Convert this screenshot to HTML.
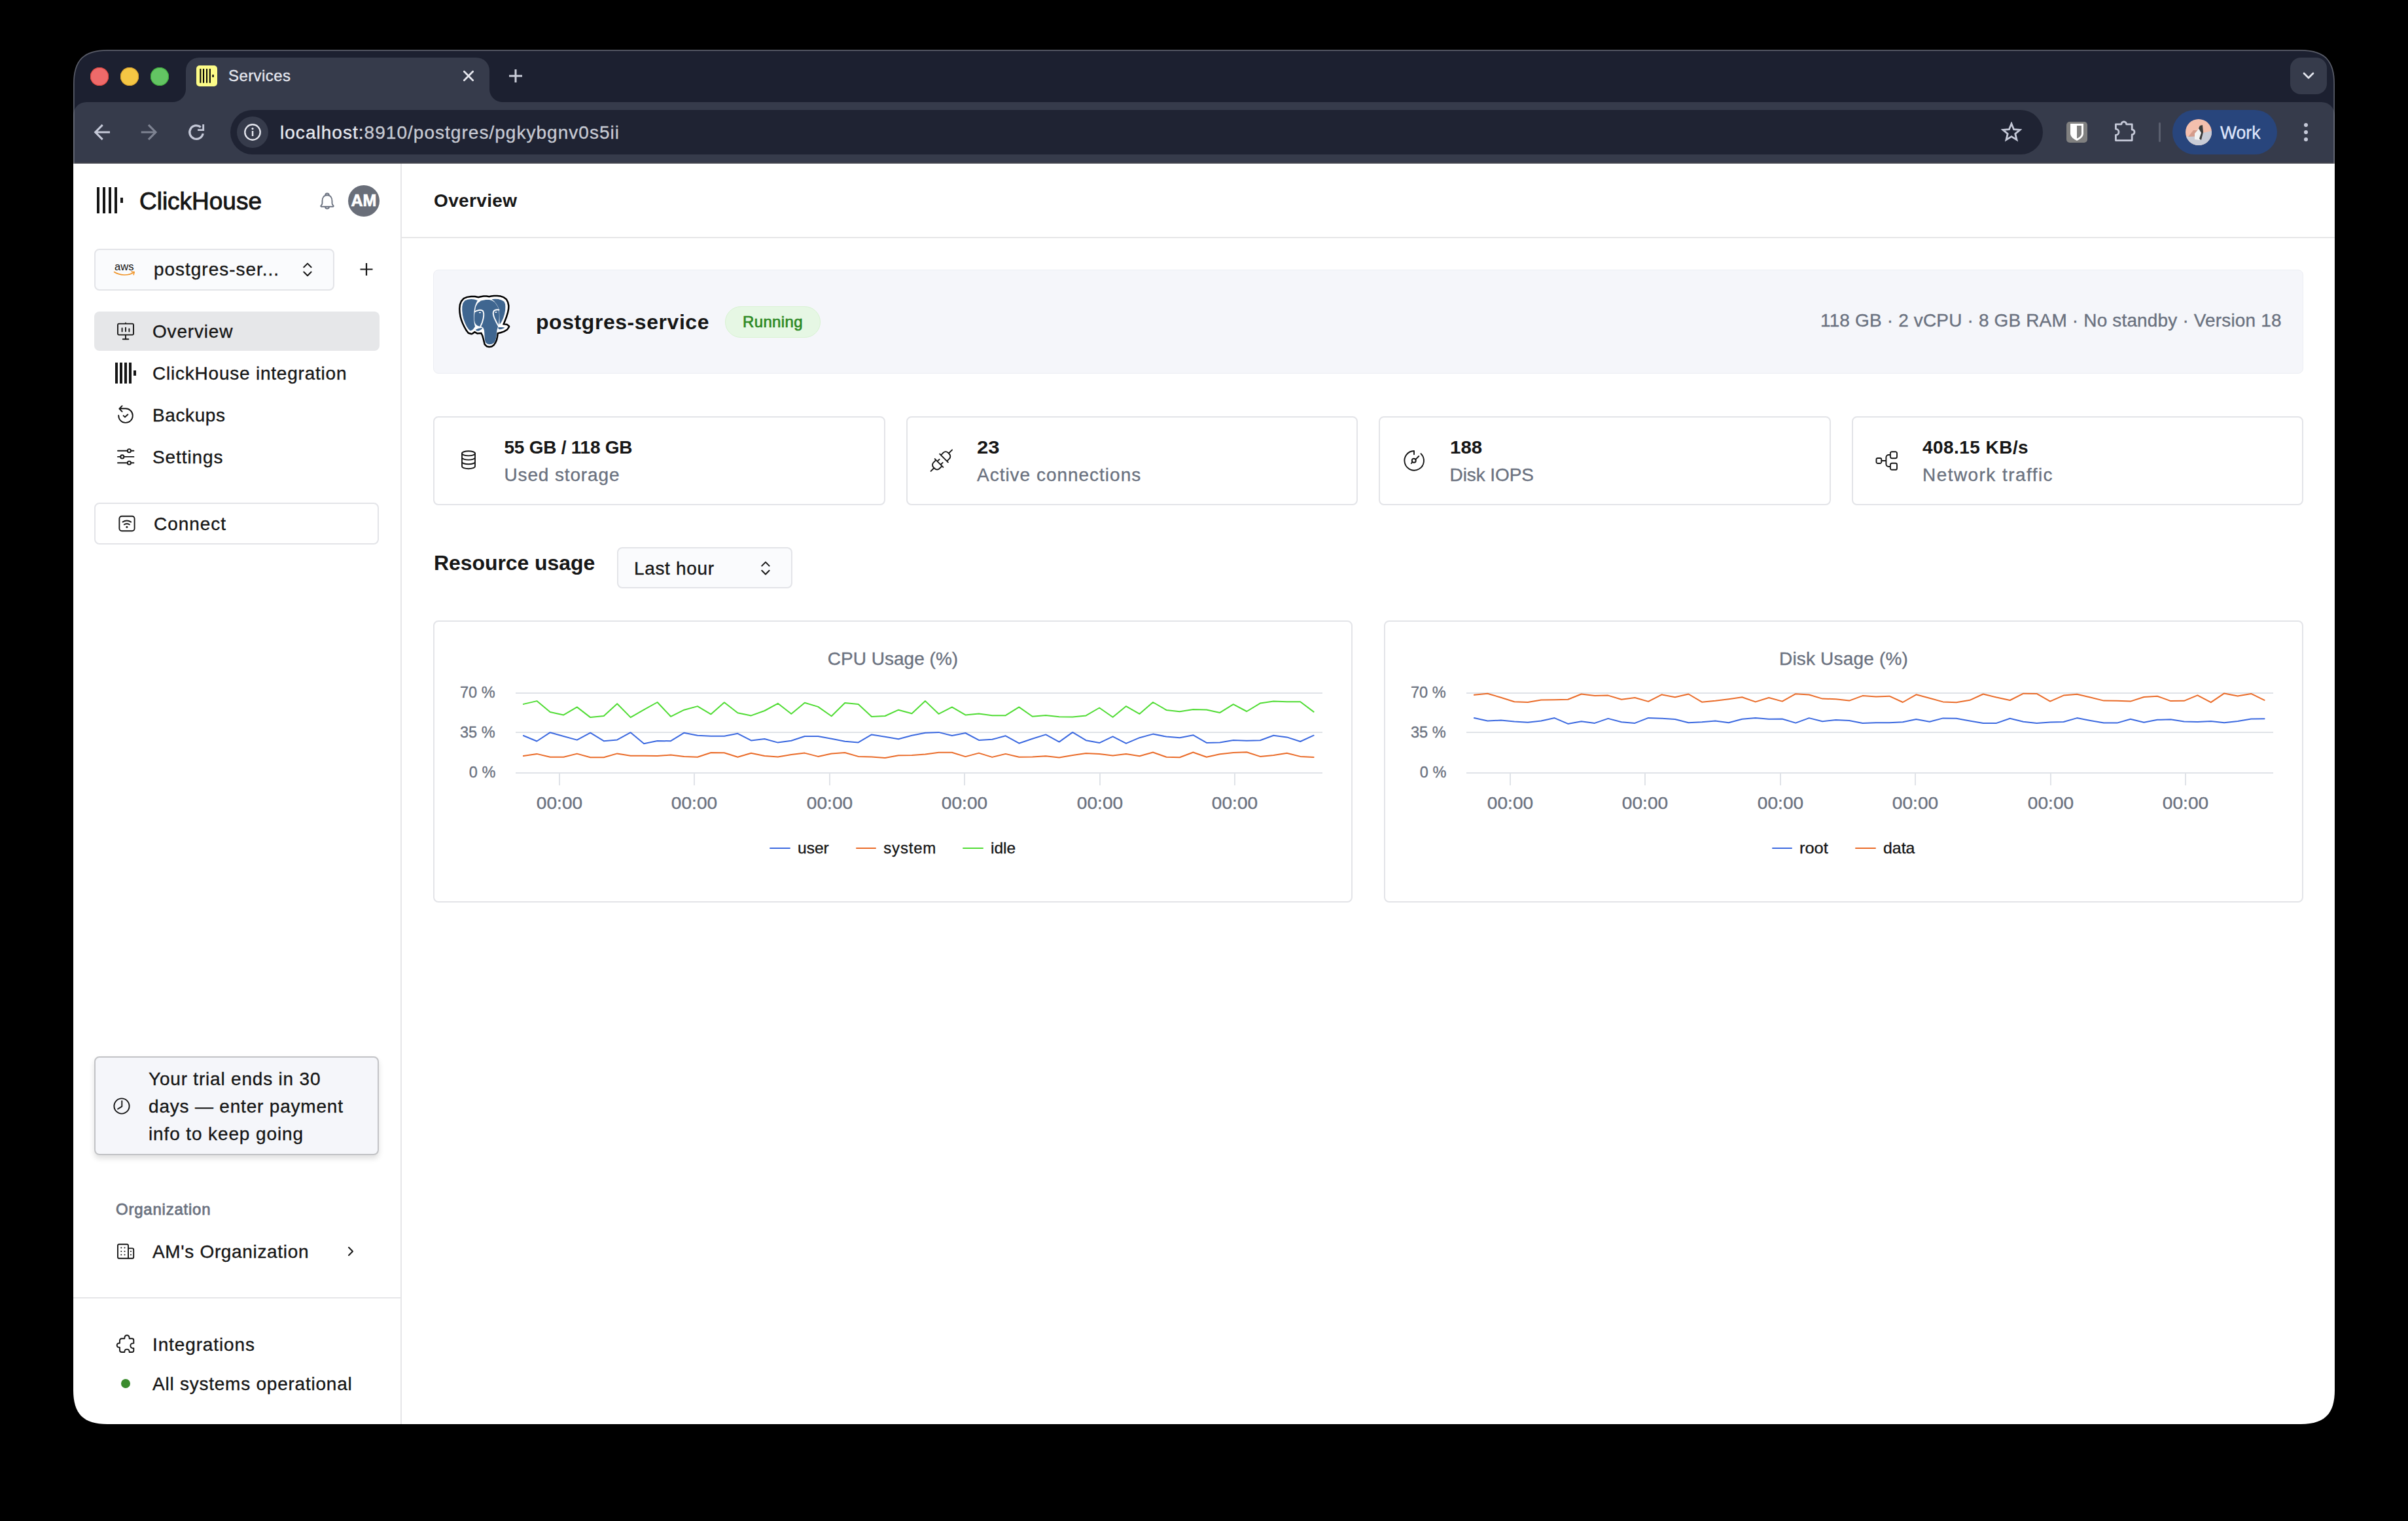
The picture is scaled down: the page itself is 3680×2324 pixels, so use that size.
<!DOCTYPE html>
<html><head><meta charset="utf-8"><title>Services</title>
<style>
html,body{margin:0;padding:0;width:3680px;height:2324px;overflow:hidden;background:#000;}
.a{position:absolute;}
.t{position:absolute;white-space:nowrap;font-family:"Liberation Sans",sans-serif;-webkit-text-stroke-width:0.35px;}
#win{position:absolute;left:0;top:0;width:3680px;height:2324px;clip-path:path('M164,76 H3516 C3552.4,76 3568,91.6 3568,128 V2124 C3568,2160.4 3552.4,2176 3516,2176 H164 C127.6,2176 112,2160.4 112,2124 V128 C112,91.6 127.6,76 164,76 Z');}
</style></head><body>
<div id="win">
<div class="a" style="left:112px;top:76px;width:3456px;height:174px;background:#1c2030;"></div>
<div class="a" style="left:112px;top:156px;width:3456px;height:94px;background:#363b4b;border-radius:20px 20px 0 0;"></div>
<div class="a" style="left:112px;top:248px;width:3456px;height:2px;background:#42444d;"></div>
<div class="a" style="left:284px;top:88px;width:464px;height:72px;background:#363b4b;border-radius:20px 20px 0 0;"></div>
<div class="a" style="left:264px;top:136px;width:20px;height:20px;background:radial-gradient(circle at 0 0, transparent 19.5px, #363b4b 20.5px);"></div>
<div class="a" style="left:748px;top:136px;width:20px;height:20px;background:radial-gradient(circle at 100% 0, transparent 19.5px, #363b4b 20.5px);"></div>
<div class="a" style="left:138px;top:103px;width:28px;height:28px;background:#ee6a6a;border-radius:50%;box-shadow:inset 0 0 0 1px #e5483f;"></div>
<div class="a" style="left:184px;top:103px;width:28px;height:28px;background:#f4c644;border-radius:50%;box-shadow:inset 0 0 0 1px #dea52c;"></div>
<div class="a" style="left:230px;top:103px;width:28px;height:28px;background:#63c463;border-radius:50%;box-shadow:inset 0 0 0 1px #3fae3b;"></div>
<svg class="a" style="left:300px;top:100px;" width="32" height="32" viewBox="0 0 32 32"><rect x="0" y="0" width="32" height="32" rx="5" fill="#fdfc88"/><rect x="5.3" y="5.1" width="2.1" height="21.6" fill="#050505"/><rect x="10" y="5.1" width="2.1" height="21.6" fill="#050505"/><rect x="15" y="5.1" width="2.1" height="21.6" fill="#050505"/><rect x="19.8" y="5.1" width="2.1" height="21.6" fill="#050505"/><rect x="24.4" y="14" width="2.3" height="4" fill="#050505"/></svg>
<div class="t" id="t0" style="left:349px;top:104px;font-size:24px;line-height:24px;font-weight:400;color:#e4e6ee;letter-spacing:0.424px;">Services</div>
<div class="a" style="left:3500px;top:88px;width:56px;height:56px;background:#363b4b;border-radius:16px;"></div>
<svg class="a" style="left:3518px;top:109px;" width="20" height="14" viewBox="0 0 20 14"><path d="M3 3L10 10L17 3" stroke="#e4e6ee" stroke-width="2.8" fill="none" stroke-linecap="round" stroke-linejoin="round"/></svg>
<div class="a" style="left:352px;top:168px;width:2770px;height:68px;background:#1f2333;border-radius:34px;"></div>
<div class="a" style="left:362px;top:178px;width:48px;height:48px;background:#363b4b;border-radius:50%;"></div>
<svg class="a" style="left:373px;top:189px;" width="26" height="26" viewBox="0 0 26 26"><circle cx="13" cy="13" r="11.7" stroke="#e4e6ee" stroke-width="2.4" fill="none"/><rect x="11.8" y="11" width="2.5" height="8" fill="#e4e6ee"/><circle cx="13" cy="7.6" r="1.6" fill="#e4e6ee"/></svg>
<div class="t" id="t1" style="left:428px;top:189px;font-size:28px;line-height:28px;font-weight:400;color:#e6e8ee;letter-spacing:1.028px;">localhost:<span style="color:#c6c9d2">8910/postgres/pgkybgnv0s5ii</span></div>
<svg class="a" style="left:3058px;top:186px;" width="32" height="31" viewBox="0 0 32 31"><path d="M16 3L19.6 11.7L29 12.4L21.8 18.4L24 27.6L16 22.6L8 27.6L10.2 18.4L3 12.4L12.4 11.7Z" stroke="#c5c9d8" stroke-width="2.8" fill="none" stroke-linejoin="miter"/></svg>
<div class="a" style="left:3158px;top:186px;width:32px;height:32px;background:#808080;border-radius:5px;"></div>
<svg class="a" style="left:3158px;top:186px;" width="32" height="32" viewBox="0 0 32 32"><path d="M6 3H26V18C26 23 21 26.5 16 29C11 26.5 6 23 6 18Z" fill="#fff"/><path d="M16 6H23V18C23 21.5 19.5 24 16 25.6Z" fill="#808080"/></svg>
<div class="a" style="left:3299px;top:187px;width:3px;height:30px;background:#5a5f6e;border-radius:2px;"></div>
<div class="a" style="left:3320px;top:168px;width:160px;height:68px;background:#28457c;border-radius:34px;"></div>
<svg class="a" style="left:3340px;top:182px;" width="40" height="40" viewBox="0 0 40 40"><defs><clipPath id="avc"><circle cx="20" cy="20" r="20"/></clipPath></defs><g clip-path="url(#avc)"><rect width="40" height="40" fill="#f4bfad"/><path d="M0 27L40 18V40H0Z" fill="#c9ccd6"/><path d="M4 27L12 17L20 17L22 26Z" fill="#d49c8c"/><path d="M14 31L14 22L21 14L24 21L22 32Z" fill="#f2f2f2"/><path d="M20 14L22 10L26 9L27 20L24 32L21 30L24 21Z" fill="#3b3b3b"/></g></svg>
<div class="t" id="t2" style="left:3393px;top:189px;font-size:28px;line-height:28px;font-weight:400;color:#dfe5fb;transform-origin:0 0;transform:scaleX(0.9487);">Work</div>
<div class="a" style="left:3521px;top:187.8px;width:6.400000000000091px;height:6.399999999999977px;background:#c5c9d8;border-radius:50%;"></div>
<div class="a" style="left:3521px;top:198.8px;width:6.400000000000091px;height:6.399999999999977px;background:#c5c9d8;border-radius:50%;"></div>
<div class="a" style="left:3521px;top:209.8px;width:6.400000000000091px;height:6.399999999999977px;background:#c5c9d8;border-radius:50%;"></div>
<svg class="a" style="left:0;top:0;z-index:5" width="3680" height="1000" viewBox="0 0 3680 1000"><path d="M164,76 H3516 C3552.4,76 3568,91.6 3568,128 V2124 C3568,2160.4 3552.4,2176 3516,2176 H164 C127.6,2176 112,2160.4 112,2124 V128 C112,91.6 127.6,76 164,76 Z" fill="none" stroke="rgba(255,255,255,0.27)" stroke-width="3.4"/></svg>
<div class="a" style="left:112px;top:250px;width:501px;height:1926px;background:#fff;"></div>
<div class="a" style="left:612px;top:250px;width:2px;height:1926px;background:#e6e6e8;"></div>
<div class="a" style="left:148px;top:286px;width:4px;height:40px;background:#161616;"></div>
<div class="a" style="left:157px;top:286px;width:4px;height:40px;background:#161616;"></div>
<div class="a" style="left:166px;top:286px;width:4px;height:40px;background:#161616;"></div>
<div class="a" style="left:175px;top:286px;width:4px;height:40px;background:#161616;"></div>
<div class="a" style="left:184px;top:302px;width:4px;height:8px;background:#161616;"></div>
<div class="t" id="t3" style="left:213px;top:289px;font-size:37px;line-height:37px;font-weight:400;color:#161616;letter-spacing:-0.014px;-webkit-text-stroke:0.9px #161616;">ClickHouse</div>
<div class="a" style="left:532px;top:283px;width:48px;height:48px;background:#696e79;border-radius:50%;"></div>
<div class="t" id="t4" style="left:556px;transform:translateX(-50%);top:294px;font-size:25px;line-height:25px;font-weight:700;color:#ffffff;-webkit-text-stroke-width:0;-webkit-text-stroke:0.7px #fff;">AM</div>
<div class="a" style="left:144px;top:380px;width:367px;height:64px;background:#fafbfd;border:2px solid #e3e4e8;border-radius:8px;box-sizing:border-box;"></div>
<div class="t" id="t5" style="left:175px;top:398.7px;font-size:17px;line-height:17px;font-weight:400;color:#111;transform-origin:0 0;transform:scaleX(0.9757);-webkit-text-stroke-width:0;">aws</div>
<div class="t" id="t6" style="left:235px;top:398px;font-size:28px;line-height:28px;font-weight:400;color:#161616;letter-spacing:0.971px;">postgres-ser...</div>
<div class="a" style="left:144px;top:476px;width:436px;height:60px;background:#e6e7e9;border-radius:8px;"></div>
<div class="t" id="t7" style="left:233px;top:493px;font-size:28px;line-height:28px;font-weight:400;color:#161616;letter-spacing:0.828px;">Overview</div>
<div class="a" style="left:176px;top:554px;width:3.6999999999999886px;height:32px;background:#161616;"></div>
<div class="a" style="left:183px;top:554px;width:3.6999999999999886px;height:32px;background:#161616;"></div>
<div class="a" style="left:190px;top:554px;width:3.6999999999999886px;height:32px;background:#161616;"></div>
<div class="a" style="left:197px;top:554px;width:3.6999999999999886px;height:32px;background:#161616;"></div>
<div class="a" style="left:204px;top:566px;width:3.6999999999999886px;height:8px;background:#161616;"></div>
<div class="t" id="t8" style="left:233px;top:557px;font-size:28px;line-height:28px;font-weight:400;color:#161616;letter-spacing:0.779px;">ClickHouse integration</div>
<div class="t" id="t9" style="left:233px;top:621px;font-size:28px;line-height:28px;font-weight:400;color:#161616;letter-spacing:0.599px;">Backups</div>
<div class="t" id="t10" style="left:233px;top:685px;font-size:28px;line-height:28px;font-weight:400;color:#161616;letter-spacing:0.904px;">Settings</div>
<div class="a" style="left:144px;top:768px;width:435px;height:64px;background:#fff;border:2px solid #e3e4e8;border-radius:8px;box-sizing:border-box;"></div>
<div class="t" id="t11" style="left:235px;top:787px;font-size:28px;line-height:28px;font-weight:400;color:#161616;letter-spacing:0.951px;">Connect</div>
<div class="a" style="left:144px;top:1614px;width:435px;height:151px;background:#f5f6fa;border:2px solid #c2c3c6;border-radius:8px;box-sizing:border-box;box-shadow:0 5px 9px rgba(0,0,0,0.13);"></div>
<div class="t" id="t12" style="left:227px;top:1635px;font-size:28px;line-height:28px;font-weight:400;color:#161616;letter-spacing:0.802px;">Your trial ends in 30</div>
<div class="t" id="t13" style="left:227px;top:1677px;font-size:28px;line-height:28px;font-weight:400;color:#161616;letter-spacing:0.805px;">days — enter payment</div>
<div class="t" id="t14" style="left:227px;top:1719px;font-size:28px;line-height:28px;font-weight:400;color:#161616;letter-spacing:0.879px;">info to keep going</div>
<div class="t" id="t15" style="left:177px;top:1836px;font-size:24px;line-height:24px;font-weight:400;color:#6b7280;letter-spacing:0.766px;-webkit-text-stroke:0.8px #6b7280;">Organization</div>
<div class="t" id="t16" style="left:233px;top:1899px;font-size:28px;line-height:28px;font-weight:400;color:#161616;letter-spacing:0.663px;">AM's Organization</div>
<div class="a" style="left:112px;top:1982px;width:501px;height:2px;background:#e6e6e8;"></div>
<div class="t" id="t17" style="left:233px;top:2041px;font-size:28px;line-height:28px;font-weight:400;color:#161616;letter-spacing:0.879px;">Integrations</div>
<div class="a" style="left:185.3px;top:2107px;width:14.0px;height:14px;background:#3b8c2e;border-radius:50%;"></div>
<div class="t" id="t18" style="left:233px;top:2101px;font-size:28px;line-height:28px;font-weight:400;color:#161616;letter-spacing:0.763px;">All systems operational</div>
<div class="a" style="left:614px;top:250px;width:2954px;height:1926px;background:#fff;"></div>
<div class="t" id="t19" style="left:663px;top:293px;font-size:28px;line-height:28px;font-weight:700;color:#161616;letter-spacing:0.353px;-webkit-text-stroke-width:0;">Overview</div>
<div class="a" style="left:614px;top:362px;width:2954px;height:2px;background:#e6e6e8;"></div>
<div class="a" style="left:662px;top:412px;width:2858px;height:159px;background:#f5f6fa;border:1px solid #eceef3;box-sizing:border-box;border-radius:8px;"></div>
<svg class="a" style="left:690px;top:440px;" width="100" height="100" viewBox="0 0 100 100"><g transform="translate(50 51) scale(0.965) translate(-50 -51)"><path d="M40.8,14.1 35,12.9 29.6,12.8 23.5,13.8 18.4,15.8 14.8,19.8 12.8,25 12.2,31 12.5,36.8 13.5,43 15.1,48.7 17.2,54 19.7,59.2 22.5,64.3 25.6,68.4 30.2,69.7 34.8,66.4 39.4,69 46,68.4 48.3,73 50,78.9 51.9,86.8 54.5,89.3 57.9,90.1 61.5,89.5 64.4,87.4 66.7,84 68.4,80.2 69.5,75 70.3,69 75.6,67.7 80.5,66 85.5,63.1 88.1,59.2 85.5,57.2 78.9,56.5 81.5,50 84,43.5 86.1,36.8 87.2,31 87.4,26.3 86.2,21 84.2,17.1 80,14 75.6,12.5 70.5,11.8 65.7,11.8 61.5,12.3 57.9,13.1 53.5,12.5 49.3,12.5 45,13.1Z" fill="#fff" stroke="#000" stroke-width="5.2" stroke-linejoin="round"/><path d="M40.8,14.1 35,12.9 29.6,12.8 23.5,13.8 18.4,15.8 14.8,19.8 12.8,25 12.2,31 12.5,36.8 13.5,43 15.1,48.7 17.2,54 19.7,59.2 22.5,64.3 25.6,68.4 30.2,69.7 34.8,66.4 39.4,69 46,68.4 48.3,73 50,78.9 51.9,86.8 54.5,89.3 57.9,90.1 61.5,89.5 64.4,87.4 66.7,84 68.4,80.2 69.5,75 70.3,69 75.6,67.7 80.5,66 85.5,63.1 88.1,59.2 85.5,57.2 78.9,56.5 81.5,50 84,43.5 86.1,36.8 87.2,31 87.4,26.3 86.2,21 84.2,17.1 80,14 75.6,12.5 70.5,11.8 65.7,11.8 61.5,12.3 57.9,13.1 53.5,12.5 49.3,12.5 45,13.1Z" fill="#fff"/><path d="M39.4,17.8 34.5,16.2 29.6,15.8 23.5,16.6 19.1,18.4 16.2,22.5 15.1,27.6 15,34 15.8,40.8 17.3,47.5 19.7,53.9 22.2,59 25,63.1 27.6,65.7 30.9,65.1 33.3,62.3 35.5,59.2 34.2,53.9 33.5,46 33.6,39 34.2,32.9 35.2,27.6 36.8,23Z" fill="#3f6690"/><path d="M35.6,34.2 36.6,28 39.5,22.5 44.7,18.3 52.6,16.8 58,16.9 62.5,18.1 66.8,21 69.7,25 72,29 73,32.9 73.7,40 73.6,46 73.2,52 72.3,57.9 71,61.8 70.2,65 69.7,69 69.2,74 68.4,78.9 67.2,82.3 65.7,84.8 62,87 57.9,87.4 54.5,86.5 51.9,84.2 51,80 50.6,75.6 50.3,70 50,65.7 49.2,62.8 48.2,61 45.4,59.2 42,58.9 39.4,57.9 37.2,56.3 35.5,53.9 34.6,50 34.2,46 34.5,40Z" fill="#3f6690"/><path d="M61.8,16.1 67,15.6 72.3,15.8 77.3,17.4 81.5,19.7 83.2,23.5 83.5,27.6 83.3,33.5 82.2,39.4 80.3,45.5 77.6,51.3 75.8,54 74.3,55.9 74.3,52 74.2,46 74,39 73.5,32.9 72,28.5 69.7,24.3 66,19.5Z" fill="#3f6690"/><path d="M36.3 64.6C39 62.5 43 61.8 47 61.2C46.5 63.6 44 65.5 40.5 66.2C38.5 66.3 37 65.7 36.3 64.6Z" fill="#3f6690"/><path d="M71.8 60.5C75 60.3 79.5 60.5 82.5 60.8C81 62.3 78 63.4 74.5 63.6C72.8 63.5 72 62 71.8 60.5Z" fill="#3f6690"/><path d="M35.2 35.8C38.6 33.3 44 32.2 47.6 34.2C49.6 36.5 49.5 42 48.4 47C47.4 51.5 46 55.5 44.2 58.5" stroke="#fff" stroke-width="2" fill="none" stroke-linecap="round"/><path d="M73.2 32.9C69.5 32.3 66.4 33 64.8 35.2C63.8 37.6 64.3 41.5 66.2 46C68 50 70.2 54.5 72.2 57.8" stroke="#fff" stroke-width="2" fill="none" stroke-linecap="round"/><ellipse cx="43.2" cy="37.1" rx="1.6" ry="0.9" fill="#fff"/><ellipse cx="68.6" cy="36.5" rx="1.6" ry="0.9" fill="#fff"/></g></svg>
<div class="t" id="t20" style="left:819px;top:476px;font-size:32px;line-height:32px;font-weight:700;color:#161616;letter-spacing:0.558px;-webkit-text-stroke-width:0;">postgres-service</div>
<div class="a" style="left:1108px;top:468px;width:146px;height:48px;background:#e6f7e4;border:1.5px solid #d8f3d2;box-sizing:border-box;border-radius:24px;"></div>
<div class="t" id="t21" style="left:1135px;top:479.8px;font-size:24px;line-height:24px;font-weight:400;color:#2e8a24;letter-spacing:0.349px;-webkit-text-stroke:0.7px #2e8a24;">Running</div>
<div class="t" id="t22" style="left:2782px;top:476px;font-size:28px;line-height:28px;font-weight:400;color:#6b7280;letter-spacing:0.154px;">118 GB · 2 vCPU · 8 GB RAM · No standby · Version 18</div>
<div class="a" style="left:662px;top:636px;width:690.5px;height:136px;border:2px solid #e3e4e8;border-radius:8px;box-sizing:border-box;"></div>
<div class="t" id="t23" style="left:770.5px;top:670px;font-size:28px;line-height:28px;font-weight:700;color:#161616;letter-spacing:-0.248px;-webkit-text-stroke-width:0;">55 GB / 118 GB</div>
<div class="t" id="t24" style="left:770.5px;top:711.6px;font-size:28px;line-height:28px;font-weight:400;color:#6b7280;letter-spacing:0.859px;">Used storage</div>
<div class="a" style="left:1384.5px;top:636px;width:690.5px;height:136px;border:2px solid #e3e4e8;border-radius:8px;box-sizing:border-box;"></div>
<div class="t" id="t25" style="left:1493.0px;top:670px;font-size:28px;line-height:28px;font-weight:700;color:#161616;transform-origin:0 0;transform:scaleX(1.1073);-webkit-text-stroke-width:0;">23</div>
<div class="t" id="t26" style="left:1493.0px;top:711.6px;font-size:28px;line-height:28px;font-weight:400;color:#6b7280;letter-spacing:0.984px;">Active connections</div>
<div class="a" style="left:2107px;top:636px;width:690.5px;height:136px;border:2px solid #e3e4e8;border-radius:8px;box-sizing:border-box;"></div>
<div class="t" id="t27" style="left:2215.5px;top:670px;font-size:28px;line-height:28px;font-weight:700;color:#161616;transform-origin:0 0;transform:scaleX(1.0531);-webkit-text-stroke-width:0;">188</div>
<div class="t" id="t28" style="left:2215.5px;top:711.6px;font-size:28px;line-height:28px;font-weight:400;color:#6b7280;letter-spacing:-0.080px;">Disk IOPS</div>
<div class="a" style="left:2829.5px;top:636px;width:690.5px;height:136px;border:2px solid #e3e4e8;border-radius:8px;box-sizing:border-box;"></div>
<div class="t" id="t29" style="left:2938.0px;top:670px;font-size:28px;line-height:28px;font-weight:700;color:#161616;letter-spacing:0.448px;-webkit-text-stroke-width:0;">408.15 KB/s</div>
<div class="t" id="t30" style="left:2938.0px;top:711.6px;font-size:28px;line-height:28px;font-weight:400;color:#6b7280;letter-spacing:1.441px;">Network traffic</div>
<div class="t" id="t31" style="left:663px;top:844px;font-size:32px;line-height:32px;font-weight:700;color:#161616;letter-spacing:-0.078px;-webkit-text-stroke-width:0;">Resource usage</div>
<div class="a" style="left:943px;top:836px;width:268px;height:63px;background:#fafbfd;border:2px solid #e3e4e8;border-radius:8px;box-sizing:border-box;"></div>
<div class="t" id="t32" style="left:969px;top:855px;font-size:28px;line-height:28px;font-weight:400;color:#161616;letter-spacing:0.656px;">Last hour</div>
<div class="a" style="left:662px;top:948px;width:1405px;height:431px;border:2px solid #e3e4e8;border-radius:8px;box-sizing:border-box;"></div>
<div class="t" id="t33" style="left:1364.5px;transform:translateX(-50%);top:992.5px;font-size:28px;line-height:28px;font-weight:400;color:#6b7280;letter-spacing:0.011px;">CPU Usage (%)</div>
<div class="a" style="left:788px;top:1057.9px;width:1233px;height:2.0px;background:#e0e3e8;"></div>
<div class="a" style="left:788px;top:1117.9px;width:1233px;height:2.0px;background:#e0e3e8;"></div>
<div class="a" style="left:788px;top:1179.9px;width:1233px;height:2.0px;background:#e0e3e8;"></div>
<div class="t" id="t34" style="right:2923px;top:1046px;font-size:24px;line-height:24px;font-weight:400;color:#6b7280;transform-origin:100% 0;transform:scaleX(0.9817);">70 %</div>
<div class="t" id="t35" style="right:2923px;top:1107px;font-size:24px;line-height:24px;font-weight:400;color:#6b7280;transform-origin:100% 0;transform:scaleX(0.9817);">35 %</div>
<div class="t" id="t36" style="right:2923px;top:1168px;font-size:24px;line-height:24px;font-weight:400;color:#6b7280;transform-origin:100% 0;transform:scaleX(0.9792);">0 %</div>
<div class="a" style="left:854.0px;top:1181px;width:2.0px;height:19px;background:#e0e3e8;"></div>
<div class="t" id="t37" style="left:855.0px;transform:translateX(-50%);top:1214px;font-size:26px;line-height:26px;font-weight:400;color:#6b7280;transform-origin:50% 0;transform:translateX(-50%) scaleX(1.0802);">00:00</div>
<div class="a" style="left:1060.4px;top:1181px;width:2.0px;height:19px;background:#e0e3e8;"></div>
<div class="t" id="t38" style="left:1061.4px;transform:translateX(-50%);top:1214px;font-size:26px;line-height:26px;font-weight:400;color:#6b7280;transform-origin:50% 0;transform:translateX(-50%) scaleX(1.0802);">00:00</div>
<div class="a" style="left:1266.8px;top:1181px;width:2.0px;height:19px;background:#e0e3e8;"></div>
<div class="t" id="t39" style="left:1267.8px;transform:translateX(-50%);top:1214px;font-size:26px;line-height:26px;font-weight:400;color:#6b7280;transform-origin:50% 0;transform:translateX(-50%) scaleX(1.0802);">00:00</div>
<div class="a" style="left:1473.2px;top:1181px;width:2.0px;height:19px;background:#e0e3e8;"></div>
<div class="t" id="t40" style="left:1474.2px;transform:translateX(-50%);top:1214px;font-size:26px;line-height:26px;font-weight:400;color:#6b7280;transform-origin:50% 0;transform:translateX(-50%) scaleX(1.0802);">00:00</div>
<div class="a" style="left:1679.6px;top:1181px;width:2.0px;height:19px;background:#e0e3e8;"></div>
<div class="t" id="t41" style="left:1680.6px;transform:translateX(-50%);top:1214px;font-size:26px;line-height:26px;font-weight:400;color:#6b7280;transform-origin:50% 0;transform:translateX(-50%) scaleX(1.0802);">00:00</div>
<div class="a" style="left:1886.0px;top:1181px;width:2.0px;height:19px;background:#e0e3e8;"></div>
<div class="t" id="t42" style="left:1887.0px;transform:translateX(-50%);top:1214px;font-size:26px;line-height:26px;font-weight:400;color:#6b7280;transform-origin:50% 0;transform:translateX(-50%) scaleX(1.0802);">00:00</div>
<div class="a" style="left:1176.2px;top:1295px;width:31.5px;height:2px;background:#3b69e0;border-radius:1px;"></div>
<div class="t" id="t43" style="left:1219px;top:1284px;font-size:24px;line-height:24px;font-weight:400;color:#161616;transform-origin:0 0;transform:scaleX(1.0238);">user</div>
<div class="a" style="left:1307.5px;top:1295px;width:31.5px;height:2px;background:#ea6b28;border-radius:1px;"></div>
<div class="t" id="t44" style="left:1350.3px;top:1284px;font-size:24px;line-height:24px;font-weight:400;color:#161616;letter-spacing:0.797px;">system</div>
<div class="a" style="left:1471.4px;top:1295px;width:31.5px;height:2px;background:#50dc34;border-radius:1px;"></div>
<div class="t" id="t45" style="left:1514px;top:1284px;font-size:24px;line-height:24px;font-weight:400;color:#161616;transform-origin:0 0;transform:scaleX(1.0225);">idle</div>
<div class="a" style="left:2115px;top:948px;width:1405px;height:431px;border:2px solid #e3e4e8;border-radius:8px;box-sizing:border-box;"></div>
<div class="t" id="t46" style="left:2817.5px;transform:translateX(-50%);top:992.5px;font-size:28px;line-height:28px;font-weight:400;color:#6b7280;letter-spacing:0.178px;">Disk Usage (%)</div>
<div class="a" style="left:2241px;top:1057.9px;width:1233px;height:2.0px;background:#e0e3e8;"></div>
<div class="a" style="left:2241px;top:1117.9px;width:1233px;height:2.0px;background:#e0e3e8;"></div>
<div class="a" style="left:2241px;top:1179.9px;width:1233px;height:2.0px;background:#e0e3e8;"></div>
<div class="t" id="t47" style="right:1470px;top:1046px;font-size:24px;line-height:24px;font-weight:400;color:#6b7280;transform-origin:100% 0;transform:scaleX(0.9817);">70 %</div>
<div class="t" id="t48" style="right:1470px;top:1107px;font-size:24px;line-height:24px;font-weight:400;color:#6b7280;transform-origin:100% 0;transform:scaleX(0.9817);">35 %</div>
<div class="t" id="t49" style="right:1470px;top:1168px;font-size:24px;line-height:24px;font-weight:400;color:#6b7280;transform-origin:100% 0;transform:scaleX(0.9792);">0 %</div>
<div class="a" style="left:2307.0px;top:1181px;width:2.0px;height:19px;background:#e0e3e8;"></div>
<div class="t" id="t50" style="left:2308.0px;transform:translateX(-50%);top:1214px;font-size:26px;line-height:26px;font-weight:400;color:#6b7280;transform-origin:50% 0;transform:translateX(-50%) scaleX(1.0802);">00:00</div>
<div class="a" style="left:2513.4px;top:1181px;width:2.0px;height:19px;background:#e0e3e8;"></div>
<div class="t" id="t51" style="left:2514.4px;transform:translateX(-50%);top:1214px;font-size:26px;line-height:26px;font-weight:400;color:#6b7280;transform-origin:50% 0;transform:translateX(-50%) scaleX(1.0802);">00:00</div>
<div class="a" style="left:2719.8px;top:1181px;width:2.0px;height:19px;background:#e0e3e8;"></div>
<div class="t" id="t52" style="left:2720.8px;transform:translateX(-50%);top:1214px;font-size:26px;line-height:26px;font-weight:400;color:#6b7280;transform-origin:50% 0;transform:translateX(-50%) scaleX(1.0802);">00:00</div>
<div class="a" style="left:2926.2px;top:1181px;width:2.0px;height:19px;background:#e0e3e8;"></div>
<div class="t" id="t53" style="left:2927.2px;transform:translateX(-50%);top:1214px;font-size:26px;line-height:26px;font-weight:400;color:#6b7280;transform-origin:50% 0;transform:translateX(-50%) scaleX(1.0802);">00:00</div>
<div class="a" style="left:3132.6px;top:1181px;width:2.0px;height:19px;background:#e0e3e8;"></div>
<div class="t" id="t54" style="left:3133.6px;transform:translateX(-50%);top:1214px;font-size:26px;line-height:26px;font-weight:400;color:#6b7280;transform-origin:50% 0;transform:translateX(-50%) scaleX(1.0802);">00:00</div>
<div class="a" style="left:3339.0px;top:1181px;width:2.0px;height:19px;background:#e0e3e8;"></div>
<div class="t" id="t55" style="left:3340.0px;transform:translateX(-50%);top:1214px;font-size:26px;line-height:26px;font-weight:400;color:#6b7280;transform-origin:50% 0;transform:translateX(-50%) scaleX(1.0802);">00:00</div>
<div class="a" style="left:2707.5px;top:1295px;width:31.5px;height:2px;background:#3b69e0;border-radius:1px;"></div>
<div class="t" id="t56" style="left:2750px;top:1284px;font-size:24px;line-height:24px;font-weight:400;color:#161616;transform-origin:0 0;transform:scaleX(1.0590);">root</div>
<div class="a" style="left:2835.3px;top:1295px;width:31.5px;height:2px;background:#ea6b28;border-radius:1px;"></div>
<div class="t" id="t57" style="left:2877.8px;top:1284px;font-size:24px;line-height:24px;font-weight:400;color:#161616;transform-origin:0 0;transform:scaleX(1.0360);">data</div>
<svg class="a" style="left:0;top:0;z-index:3" width="3680" height="2324" viewBox="0 0 3680 2324"><path d="M709.3 109.3L722.7 122.7M722.7 109.3L709.3 122.7" stroke="#e6e7ee" stroke-width="2.8" fill="none" stroke-linecap="round" stroke-linejoin="round" /><path d="M788 106V126M778 116H798" stroke="#c9ccd8" stroke-width="3" fill="none" stroke-linecap="butt" stroke-linejoin="round" /><path d="M168 202H146.5M156.7 190.9L145.7 202L156.7 213.1" stroke="#c5c9d8" stroke-width="3.1" fill="none" stroke-linecap="butt" stroke-linejoin="miter" /><path d="M215.7 202H237.2M227 190.9L238 202L227 213.1" stroke="#7e8392" stroke-width="3.1" fill="none" stroke-linecap="butt" stroke-linejoin="miter" /><path d="M310.2 204A10.3 10.3 0 1 1 306.8 194.3" stroke="#c5c9d8" stroke-width="3.3" fill="none" stroke-linecap="butt" stroke-linejoin="round" /><path d="M309.2 189.9H312.1V199.9H302.1V197.2H309.2Z" fill="#c5c9d8"/><path d="M3233.4 189.8H3242A3.8 3.8 0 0 1 3249.6 189.8H3258.2V198A3.8 3.8 0 0 1 3258.2 205.6V214.6H3233.4V206.3A4.6 4.6 0 0 0 3233.4 197.1Z" stroke="#c5c9d8" stroke-width="2.8" fill="none" stroke-linecap="round" stroke-linejoin="round" /><path d="M497.2 298.3A2.8 2.8 0 0 1 502.8 298.3M500 298.2C495 298.2 492.5 302 492.5 307V310.5C492.5 312 491.5 313.3 490.5 314.3C490 315 490.5 315.8 491.3 315.8H508.7C509.5 315.8 510 315 509.5 314.3C508.5 313.3 507.5 312 507.5 310.5V307C507.5 302 505 298.2 500 298.2ZM497 315.8A3 3 0 0 0 503 315.8" stroke="#6b7280" stroke-width="1.9" fill="none" stroke-linecap="round" stroke-linejoin="round" /><path d="M174.5 415.5C183 421 196 421.5 204 416.5M200.8 415.2L205.3 415.6L204.2 419.7" stroke="#f0952a" stroke-width="1.5" fill="none" stroke-linecap="round" stroke-linejoin="round" /><path d="M464.3 408.3L470 402.6L475.6 408.3M464.3 415.5L470 421.2L475.6 415.5" stroke="#161616" stroke-width="2" fill="none" stroke-linecap="round" stroke-linejoin="round" /><path d="M560 402V421M550.5 411.5H569.5" stroke="#161616" stroke-width="2.2" fill="none" stroke-linecap="butt" stroke-linejoin="round" /><path d="M181.5 494.6H202.5A1.6 1.6 0 0 1 204 496.2V510A1.6 1.6 0 0 1 202.5 511.6H181.5A1.6 1.6 0 0 1 180 510V496.2A1.6 1.6 0 0 1 181.5 494.6ZM192 493.4V494.6M192 511.6V518M187.8 518.2H196.4M186.6 501.5V506.5M192 500.6V506.3M197.4 502.5V506.5" stroke="#161616" stroke-width="1.9" fill="none" stroke-linecap="round" stroke-linejoin="round" /><path d="M181.2 634.8A10.8 10.8 0 1 0 192 624.3H182.6M186.6 620.2L182.4 624.5L186.6 628.9M188.6 635.1L191 637.3L195.4 633.3" stroke="#161616" stroke-width="1.9" fill="none" stroke-linecap="round" stroke-linejoin="round" /><path d="M180 688.7H194.8M200 688.7H204.4M180 697.9H184.2M189.4 697.9H204.4M180 707.2H194.8M200 707.2H204.4" stroke="#161616" stroke-width="1.9" fill="none" stroke-linecap="round" stroke-linejoin="round" /><circle cx="197.4" cy="688.7" r="2.6" stroke="#161616" stroke-width="1.9" fill="none"/><circle cx="186.8" cy="697.9" r="2.6" stroke="#161616" stroke-width="1.9" fill="none"/><circle cx="197.4" cy="707.2" r="2.6" stroke="#161616" stroke-width="1.9" fill="none"/><path d="M186 788.8H202A3.6 3.6 0 0 1 205.6 792.4V807.6A3.6 3.6 0 0 1 202 811.2H186A3.6 3.6 0 0 1 182.4 807.6V792.4A3.6 3.6 0 0 1 186 788.8ZM187.5 797.6C191.5 795 196 795 200.2 797.6M189.8 801.5C192.5 799.9 195.2 799.9 197.9 801.5" stroke="#161616" stroke-width="1.9" fill="none" stroke-linecap="round" stroke-linejoin="round" /><circle cx="193.9" cy="805.3" r="1.5" fill="#161616"/><circle cx="186" cy="1690" r="11.6" stroke="#161616" stroke-width="1.9" fill="none"/><path d="M186.3 1682.3V1690.6L180 1694.5" stroke="#161616" stroke-width="1.9" fill="none" stroke-linecap="round" stroke-linejoin="round" /><path d="M182 1901.2H194A2 2 0 0 1 196 1903.2V1922.8H182A2 2 0 0 1 180 1920.8V1903.2A2 2 0 0 1 182 1901.2ZM196 1907.4H202.2A2 2 0 0 1 204.2 1909.4V1920.8A2 2 0 0 1 202.2 1922.8H196" stroke="#161616" stroke-width="1.9" fill="none" stroke-linecap="round" stroke-linejoin="round" /><circle cx="185.3" cy="1906.5" r="1.05" fill="#161616"/><circle cx="190.5" cy="1906.5" r="1.05" fill="#161616"/><circle cx="185.3" cy="1912" r="1.05" fill="#161616"/><circle cx="190.5" cy="1912" r="1.05" fill="#161616"/><circle cx="185.3" cy="1917.3" r="1.05" fill="#161616"/><circle cx="190.5" cy="1917.3" r="1.05" fill="#161616"/><circle cx="200" cy="1912" r="1.05" fill="#161616"/><circle cx="200" cy="1917.3" r="1.05" fill="#161616"/><path d="M533 1906L539 1912L533 1918" stroke="#161616" stroke-width="2" fill="none" stroke-linecap="round" stroke-linejoin="round" /><path d="M183 2048.5A3 3 0 0 1 186 2045.3H190.3C190.3 2042 192 2040.3 194 2040.3C196 2040.3 197.7 2042 197.7 2045.3H201.8A2.5 2.5 0 0 1 204.3 2047.8V2052.4C201.2 2052.4 199.3 2054 199.3 2056.2C199.3 2058.5 201.2 2060 204.3 2060V2063.5A2.5 2.5 0 0 1 201.8 2066H197.7C197.7 2063.3 196 2061.6 194 2061.6C192 2061.6 190.3 2063.3 190.3 2066H186A3 3 0 0 1 183 2063V2058.8C180.3 2058.8 178.7 2057.3 178.7 2055.5C178.7 2053.7 180.3 2052.2 183 2052.2Z" stroke="#161616" stroke-width="1.9" fill="none" stroke-linecap="round" stroke-linejoin="round" /><ellipse cx="716" cy="692.8" rx="10" ry="3.6" stroke="#161616" stroke-width="1.9" fill="none"/><path d="M706 692.8V712.6M726 692.8V712.6M706 699A10 3.6 0 0 0 726 699M706 705.7A10 3.6 0 0 0 726 705.7M706 712.6A10 3.6 0 0 0 726 712.6" stroke="#161616" stroke-width="1.9" fill="none" stroke-linecap="round" stroke-linejoin="round" /><g transform="translate(1438.85 703.65) rotate(-45)"><path d="M-23 0H-16M-5.4 -6.5H-11A5 5 0 0 0 -16 -1.5V1.5A5 5 0 0 0 -11 6.5H-5.4M-5.4 -9V9M-5.4 -3.6H-1M-5.4 3.6H-1M5.2 -9V9M5.2 -6.5H10.5A5 5 0 0 1 15.5 -1.5V1.5A5 5 0 0 1 10.5 6.5H5.2M15.5 0H23" stroke="#161616" stroke-width="1.9" fill="none" stroke-linecap="round" stroke-linejoin="round"/></g><path d="M2161 689A14.8 14.8 0 1 0 2171.5 693.2M2161 689V694.2M2168.3 697L2163 702.3M2158.6 705.9L2156.8 708" stroke="#161616" stroke-width="1.9" fill="none" stroke-linecap="round" stroke-linejoin="round" /><circle cx="2160.8" cy="703.8" r="3" stroke="#161616" stroke-width="1.9" fill="none"/><path d="M2869.8 700H2873A2.3 2.3 0 0 1 2875.3 702.3V705.7A2.3 2.3 0 0 1 2873 708H2869.8A2.3 2.3 0 0 1 2867.5 705.7V702.3A2.3 2.3 0 0 1 2869.8 700ZM2875.3 704H2882.4M2888.8 695H2886.4A4 4 0 0 0 2882.4 699V709A4 4 0 0 0 2886.4 713H2888.8M2891.3 690.2H2896.6A2.4 2.4 0 0 1 2899 692.6V697.8A2.4 2.4 0 0 1 2896.6 700.2H2891.3A2.4 2.4 0 0 1 2888.9 697.8V692.6A2.4 2.4 0 0 1 2891.3 690.2ZM2891.3 707.8H2896.6A2.4 2.4 0 0 1 2899 710.2V715.4A2.4 2.4 0 0 1 2896.6 717.8H2891.3A2.4 2.4 0 0 1 2888.9 715.4V710.2A2.4 2.4 0 0 1 2891.3 707.8Z" stroke="#161616" stroke-width="1.9" fill="none" stroke-linecap="round" stroke-linejoin="round" /><path d="M1164.3 864.6L1170 858.9L1175.6 864.6M1164.3 871.8L1170 877.5L1175.6 871.8" stroke="#161616" stroke-width="2" fill="none" stroke-linecap="round" stroke-linejoin="round" /><polyline points="799.9,1124.0 820.4,1132.5 840.8,1119.2 861.3,1125.0 881.8,1130.6 902.2,1119.7 922.7,1132.2 943.2,1130.4 963.7,1119.2 984.1,1136.2 1004.6,1132.0 1025.1,1132.2 1045.5,1119.7 1066.0,1123.7 1086.5,1124.8 1106.9,1124.8 1127.4,1120.8 1147.9,1131.4 1168.4,1129.0 1188.8,1134.6 1209.3,1131.7 1229.8,1125.0 1250.2,1125.0 1270.7,1128.8 1291.2,1132.8 1311.7,1134.4 1332.1,1122.4 1352.6,1125.8 1373.1,1129.3 1393.5,1123.7 1414.0,1119.7 1434.5,1118.9 1454.9,1124.0 1475.4,1120.0 1495.9,1130.9 1516.3,1129.8 1536.8,1124.3 1557.3,1135.7 1577.8,1128.8 1598.2,1122.4 1618.7,1133.6 1639.2,1118.9 1659.6,1131.2 1680.1,1135.1 1700.6,1125.3 1721.0,1135.9 1741.5,1127.2 1762.0,1121.6 1782.5,1125.6 1802.9,1127.2 1823.4,1123.2 1843.9,1134.9 1864.3,1134.6 1884.8,1130.9 1905.3,1131.7 1925.8,1131.2 1946.2,1123.7 1966.7,1126.4 1987.2,1133.0 2007.6,1123.7" stroke="#3b69e0" stroke-width="2" fill="none" stroke-linejoin="round" stroke-linecap="round"/><polyline points="799.9,1155.1 820.4,1151.9 840.8,1156.7 861.3,1156.7 881.8,1151.6 902.2,1157.2 922.7,1157.2 943.2,1151.4 963.7,1154.8 984.1,1154.8 1004.6,1155.1 1025.1,1153.5 1045.5,1155.9 1066.0,1156.7 1086.5,1150.0 1106.9,1150.3 1127.4,1156.7 1147.9,1150.8 1168.4,1155.1 1188.8,1156.4 1209.3,1153.0 1229.8,1150.6 1250.2,1155.9 1270.7,1151.6 1291.2,1150.0 1311.7,1155.9 1332.1,1156.4 1352.6,1158.0 1373.1,1154.3 1393.5,1154.0 1414.0,1152.4 1434.5,1149.8 1454.9,1149.8 1475.4,1156.1 1495.9,1150.6 1516.3,1156.9 1536.8,1151.9 1557.3,1156.7 1577.8,1156.4 1598.2,1155.3 1618.7,1157.5 1639.2,1154.0 1659.6,1151.1 1680.1,1151.9 1700.6,1154.6 1721.0,1151.9 1741.5,1155.3 1762.0,1149.5 1782.5,1156.7 1802.9,1157.2 1823.4,1149.5 1843.9,1156.7 1864.3,1152.2 1884.8,1150.0 1905.3,1149.2 1925.8,1155.9 1946.2,1154.0 1966.7,1150.8 1987.2,1155.9 2007.6,1156.9" stroke="#ea6b28" stroke-width="2" fill="none" stroke-linejoin="round" stroke-linecap="round"/><polyline points="799.9,1075.9 820.4,1071.1 840.8,1088.1 861.3,1092.4 881.8,1080.4 902.2,1096.1 922.7,1094.0 943.2,1075.3 963.7,1096.1 984.1,1084.4 1004.6,1073.0 1025.1,1094.8 1045.5,1084.7 1066.0,1079.1 1086.5,1091.3 1106.9,1073.2 1127.4,1089.2 1147.9,1093.4 1168.4,1086.0 1188.8,1074.8 1209.3,1090.8 1229.8,1073.8 1250.2,1079.9 1270.7,1094.2 1291.2,1074.0 1311.7,1075.9 1332.1,1095.0 1352.6,1094.0 1373.1,1084.7 1393.5,1090.2 1414.0,1071.1 1434.5,1090.8 1454.9,1080.4 1475.4,1092.4 1495.9,1090.5 1516.3,1093.2 1536.8,1093.2 1557.3,1080.4 1577.8,1094.8 1598.2,1092.9 1618.7,1095.3 1639.2,1095.5 1659.6,1093.4 1680.1,1081.5 1700.6,1095.8 1721.0,1079.1 1741.5,1090.8 1762.0,1073.0 1782.5,1084.9 1802.9,1087.3 1823.4,1084.1 1843.9,1084.4 1864.3,1088.9 1884.8,1076.1 1905.3,1087.0 1925.8,1074.6 1946.2,1071.4 1966.7,1072.2 1987.2,1072.2 2007.6,1087.6" stroke="#50dc34" stroke-width="2" fill="none" stroke-linejoin="round" stroke-linecap="round"/><polyline points="2252.9,1097.1 2273.4,1101.4 2293.8,1100.6 2314.3,1102.5 2334.8,1103.8 2355.2,1101.4 2375.7,1097.1 2396.2,1105.9 2416.7,1102.2 2437.1,1104.9 2457.6,1097.9 2478.1,1103.3 2498.5,1104.9 2519.0,1096.9 2539.5,1097.7 2559.9,1099.0 2580.4,1104.3 2600.9,1103.3 2621.4,1101.4 2641.8,1104.3 2662.3,1098.7 2682.8,1096.9 2703.2,1098.7 2723.7,1098.5 2744.2,1104.6 2764.7,1097.1 2785.1,1102.2 2805.6,1100.1 2826.1,1100.9 2846.5,1104.9 2867.0,1104.3 2887.5,1104.3 2907.9,1103.3 2928.4,1099.0 2948.9,1102.7 2969.3,1097.4 2989.8,1097.7 3010.3,1101.4 3030.8,1104.9 3051.2,1104.9 3071.7,1097.7 3092.2,1102.7 3112.6,1104.9 3133.1,1103.5 3153.6,1103.0 3174.1,1097.1 3194.5,1100.9 3215.0,1104.6 3235.5,1104.6 3255.9,1098.7 3276.4,1103.8 3296.9,1099.8 3317.3,1099.3 3337.8,1102.5 3358.3,1103.0 3378.8,1101.9 3399.2,1104.3 3419.7,1101.9 3440.2,1098.5 3460.6,1098.2" stroke="#3b69e0" stroke-width="2" fill="none" stroke-linejoin="round" stroke-linecap="round"/><polyline points="2252.9,1061.8 2273.4,1059.7 2293.8,1065.8 2314.3,1072.2 2334.8,1073.0 2355.2,1069.5 2375.7,1069.2 2396.2,1068.7 2416.7,1060.5 2437.1,1062.9 2457.6,1062.6 2478.1,1068.7 2498.5,1066.0 2519.0,1071.9 2539.5,1061.3 2559.9,1065.2 2580.4,1060.5 2600.9,1072.7 2621.4,1070.8 2641.8,1068.2 2662.3,1065.2 2682.8,1072.4 2703.2,1066.0 2723.7,1071.6 2744.2,1060.2 2764.7,1061.5 2785.1,1067.6 2805.6,1068.2 2826.1,1070.6 2846.5,1063.1 2867.0,1064.5 2887.5,1063.7 2907.9,1073.0 2928.4,1061.3 2948.9,1066.8 2969.3,1072.4 2989.8,1073.2 3010.3,1069.8 3030.8,1060.5 3051.2,1065.5 3071.7,1070.0 3092.2,1059.7 3112.6,1059.9 3133.1,1071.6 3153.6,1062.6 3174.1,1060.7 3194.5,1065.5 3215.0,1070.6 3235.5,1070.8 3255.9,1071.6 3276.4,1065.0 3296.9,1063.7 3317.3,1071.1 3337.8,1070.8 3358.3,1062.3 3378.8,1073.2 3399.2,1059.4 3419.7,1063.4 3440.2,1059.9 3460.6,1069.8" stroke="#ea6b28" stroke-width="2" fill="none" stroke-linejoin="round" stroke-linecap="round"/></svg>
</div>
</body></html>
